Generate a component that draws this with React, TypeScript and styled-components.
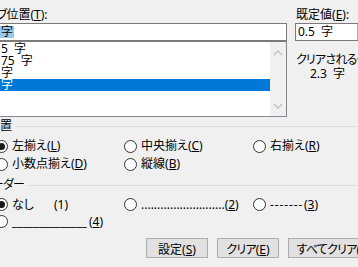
import React from 'react';
import styled, {createGlobalStyle} from "styled-components";

const GlobalStyle = createGlobalStyle`
  html, body {
    margin: 0;
    padding: 0;
    background: #f0f0f0;
    overflow: hidden;
  }
`

const tabStops = ["5 字", "75 字", "字", "字"]

const Accel = ({children, plain}: { children: React.ReactNode, plain?: boolean }) => (
    <>(<StyledAccel $plain={plain}>{children}</StyledAccel>)</>
)

const Radio = ({checked, children}: { checked?: boolean, children: React.ReactNode }) => (
    <StyledRadio>
        <RadioCircle $checked={checked}/>
        <RadioText>{children}</RadioText>
    </StyledRadio>
)

const Chevron = ({down}: { down?: boolean }) => (
    <svg width="10" height="6" viewBox="0 0 10 6">
        <polyline points={down ? "1,1 5,5 9,1" : "1,5 5,1 9,5"} fill="none" stroke="#c4c4c4" strokeWidth="1.4"/>
    </svg>
)

export default function App() {
    return (
        <>
            <GlobalStyle/>
            <Page>
                <TopSection>
                    <LeftColumn>
                        <FieldLabel $indent={7}><Kana>タブ</Kana>位置<Accel>T</Accel>:</FieldLabel>
                        <TextBox $indent={20}>
                            <Selected>字</Selected>
                        </TextBox>
                        <ListBox>
                            <ListItems>
                                {tabStops.map((item, index) => (
                                    <ListItem key={index} $selected={index === tabStops.length - 1}>{item}</ListItem>
                                ))}
                            </ListItems>
                            <ScrollBar>
                                <Chevron/>
                                <Chevron down/>
                            </ScrollBar>
                        </ListBox>
                    </LeftColumn>
                    <RightColumn>
                        <FieldLabel>既定値<Accel>E</Accel>:</FieldLabel>
                        <SpinBox>
                            <SpinValue>0.5 字</SpinValue>
                            <SpinButtons/>
                        </SpinBox>
                        <InfoLabel><Kana>クリアされるタブ</Kana>:</InfoLabel>
                        <InfoValue>2.3 字</InfoValue>
                    </RightColumn>
                </TopSection>

                <GroupHeader $gap={2}>
                    <Legend $end={12}>配置</Legend>
                    <GroupLine/>
                </GroupHeader>
                <OptionGrid $row={18}>
                    <Radio checked>左揃え<Accel>L</Accel></Radio>
                    <Radio>中央揃え<Accel>C</Accel></Radio>
                    <Radio>右揃え<Accel>R</Accel></Radio>
                    <Radio>小数点揃え<Accel>D</Accel></Radio>
                    <Radio>縦線<Accel>B</Accel></Radio>
                </OptionGrid>

                <GroupHeader $gap={5}>
                    <Legend $end={24}><Kana>リーダー</Kana></Legend>
                    <GroupLine/>
                </GroupHeader>
                <OptionGrid $row={17}>
                    <Radio checked><LeaderName>なし</LeaderName><Accel plain>1</Accel></Radio>
                    <Radio><LeaderFill $width={83}>{".".repeat(26)}</LeaderFill><Accel>2</Accel></Radio>
                    <Radio><LeaderFill $width={34} $spacing={0.9}>{"-".repeat(7)}</LeaderFill><Accel>3</Accel></Radio>
                    <Radio><LeaderFill $width={77}>{"_".repeat(14)}</LeaderFill><Accel>4</Accel></Radio>
                </OptionGrid>

                <ButtonRow>
                    <DialogButton $width={62}>設定<Accel>S</Accel></DialogButton>
                    <DialogButton $width={62}><Kana>クリア</Kana><Accel>E</Accel></DialogButton>
                    <DialogButton $width={92}><Kana>すべてクリア</Kana><Accel>A</Accel></DialogButton>
                </ButtonRow>
            </Page>
        </>
    );
}

const Page = styled.div`
  width: 358px;
  height: 267px;
  overflow: hidden;
  box-sizing: border-box;
  padding-top: 8px;
  background: #f0f0f0;
  color: #000;
  font-family: "Noto Sans", "Noto Sans CJK JP", sans-serif;
  font-size: 12px;
  font-feature-settings: "palt";
  word-spacing: 3px;
`

const Kana = styled.span`
  letter-spacing: -0.8px;
`

const StyledAccel = styled.span<{ $plain?: boolean }>`
  text-decoration: ${p => p.$plain ? "none" : "underline"};
  text-underline-offset: 1px;
`

const TopSection = styled.div`
  display: flex;
  align-items: flex-start;
`

const LeftColumn = styled.div`
  display: flex;
  flex-direction: column;
  flex: none;
  width: 307px;
  margin-left: -20px;
`

const RightColumn = styled.div`
  display: flex;
  flex-direction: column;
  flex: none;
  width: 100px;
  margin-left: 8px;
`

const FieldLabel = styled.div<{ $indent?: number }>`
  line-height: 14px;
  height: 14px;
  white-space: nowrap;
  padding-left: ${p => p.$indent ?? 1}px;
  margin-bottom: 1px;
`

const TextBox = styled.div<{ $indent: number }>`
  display: flex;
  align-items: center;
  box-sizing: border-box;
  height: 18px;
  border: 1px solid #7a7a7a;
  background: #fff;
  padding-left: ${p => p.$indent - 1}px;
`

const Selected = styled.span`
  display: inline-block;
  height: 12px;
  line-height: 12px;
  padding: 0 1px;
  background: #99c9ef;
`

const ListBox = styled.div`
  display: flex;
  box-sizing: border-box;
  height: 76px;
  border: 1px solid #828790;
  border-top-color: #7a7a7a;
  background: #fff;
`

const ListItems = styled.div`
  flex: 1;
  padding-top: 1px;
  overflow: hidden;
`

const ListItem = styled.div<{ $selected?: boolean }>`
  height: 12px;
  line-height: 12px;
  padding-left: 20px;
  white-space: nowrap;
  background: ${p => p.$selected ? "#0078d7" : "transparent"};
  color: ${p => p.$selected ? "#fff" : "#000"};
`

const ScrollBar = styled.div`
  flex: none;
  width: 16px;
  display: flex;
  flex-direction: column;
  align-items: center;
  justify-content: space-between;
  padding: 8px 0 7px;
  box-sizing: border-box;
  background: #f0f0f0;
`

const SpinBox = styled.div`
  display: flex;
  box-sizing: border-box;
  height: 18px;
  border: 1px solid #7a7a7a;
  background: #fff;
`

const SpinValue = styled.div`
  flex: none;
  width: 61px;
  padding-left: 2px;
  box-sizing: border-box;
  line-height: 16px;
  white-space: nowrap;
`

const SpinButtons = styled.div`
  flex: 1;
  border-left: 1px solid #adadad;
  background: #e5e5e5;
`

const InfoLabel = styled.div`
  margin-top: 12px;
  line-height: 14px;
  white-space: nowrap;
  padding-left: 1px;
`

const InfoValue = styled.div`
  line-height: 14px;
  padding-left: 15px;
  white-space: nowrap;
`

const GroupHeader = styled.div<{ $gap: number }>`
  display: flex;
  align-items: center;
  height: 14px;
  margin-top: ${p => p.$gap}px;
`

const Legend = styled.div<{ $end: number }>`
  flex: none;
  width: ${p => p.$end + 60}px;
  margin-left: -60px;
  text-align: right;
  line-height: 14px;
  white-space: nowrap;
`

const GroupLine = styled.div`
  flex: 1;
  height: 1px;
  margin-left: 4px;
  background: #dcdcdc;
`

const OptionGrid = styled.div<{ $row: number }>`
  display: grid;
  grid-template-columns: 129px 129px auto;
  grid-auto-rows: ${p => p.$row}px;
  margin-top: 4px;
  margin-left: -5px;
`

const StyledRadio = styled.div`
  display: flex;
  align-items: center;
  gap: 4px;
  white-space: nowrap;
`

const RadioCircle = styled.span<{ $checked?: boolean }>`
  flex: none;
  display: flex;
  align-items: center;
  justify-content: center;
  box-sizing: border-box;
  width: 13px;
  height: 13px;
  border-radius: 50%;
  border: 1px solid #333;
  background: #fff;

  &::after {
    content: "";
    display: ${p => p.$checked ? "block" : "none"};
    width: 7px;
    height: 7px;
    border-radius: 50%;
    background: #1a1a1a;
  }
`

const RadioText = styled.span`
  display: flex;
  align-items: baseline;
  line-height: 14px;
`

const LeaderName = styled.span`
  display: inline-block;
  width: 42px;
`

const LeaderFill = styled.span<{ $width: number, $spacing?: number }>`
  display: inline-block;
  min-width: ${p => p.$width}px;
  white-space: nowrap;
  letter-spacing: ${p => p.$spacing ?? 0}px;
`

const ButtonRow = styled.div`
  display: flex;
  gap: 9px;
  margin-top: 8px;
  padding-left: 146px;
`

const DialogButton = styled.button<{ $width: number }>`
  flex: none;
  width: ${p => p.$width}px;
  height: 20px;
  padding: 4px 0 0;
  box-sizing: border-box;
  border: 1px solid #adadad;
  background: #e1e1e1;
  color: #000;
  font: inherit;
  font-feature-settings: inherit;
  word-spacing: inherit;
  line-height: 14px;
  white-space: nowrap;
  overflow: hidden;
  text-align: center;
`
